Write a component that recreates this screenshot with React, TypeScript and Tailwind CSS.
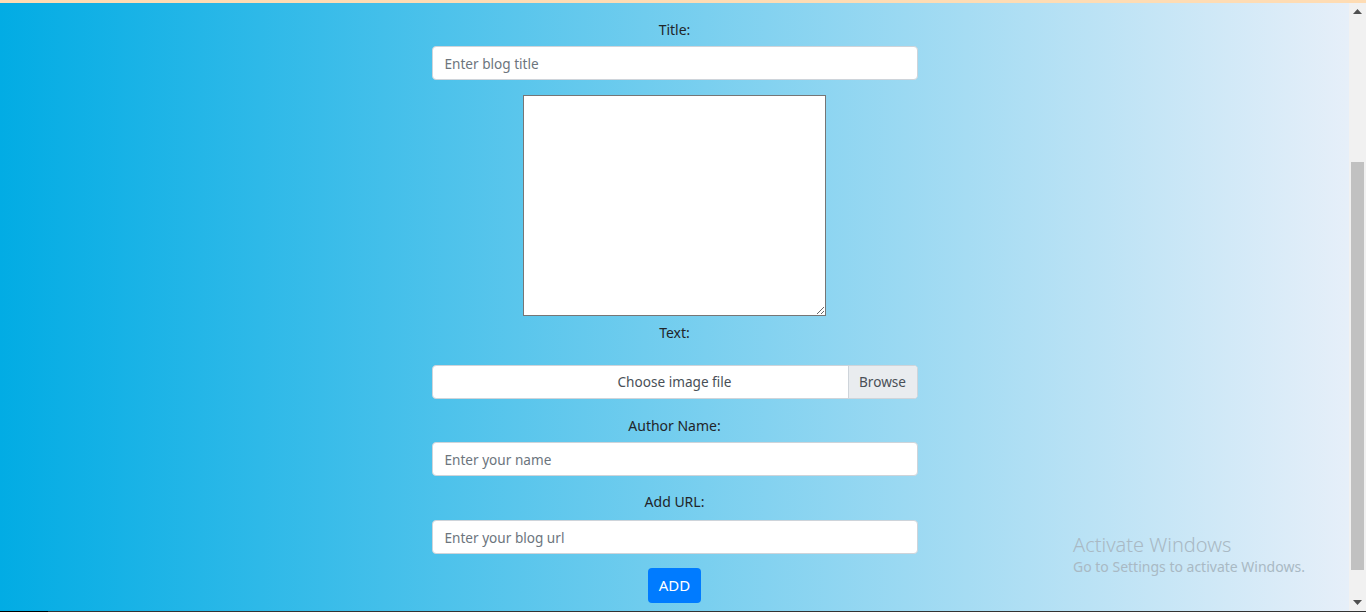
import React from "react";

const font = { fontFamily: '"Segoe UI", "Noto Sans", "Open Sans", Arial, sans-serif' };

function Label({ children, className = "" }: { children: React.ReactNode; className?: string }) {
  return (
    <div className={"text-[14px] leading-[21px] text-[#212529] text-center " + className}>{children}</div>
  );
}

function Input({ placeholder, className = "" }: { placeholder: string; className?: string }) {
  return (
    <input
      type="text"
      placeholder={placeholder}
      className={
        "block w-[486px] h-[34px] rounded-[4px] border border-[#ced4da] bg-white px-3 text-[13.6px] text-[#495057] placeholder:text-[#6c757d] outline-none " +
        className
      }
      style={font}
    />
  );
}

export default function App() {
  return (
    <div className="w-[1366px] h-[612px] flex flex-col overflow-hidden relative" style={font}>
      <div className="h-[3px] bg-[#fedcb4] shrink-0" />
      <div className="flex flex-1 min-h-0">
        <div className="flex-1 bg-[linear-gradient(to_right,#02ace4,#e6eff9)] flex flex-col items-center pt-[16px]">
          <Label>Title:</Label>
          <Input placeholder="Enter blog title" className="mt-[6px]" />
          <textarea className="block mt-[15px] w-[303px] h-[221px] border border-[#767676] bg-white" />
          <Label className="mt-[6px]">Text:</Label>
          <div className="mt-[22px] w-[486px] h-[34px] flex rounded-[4px] border border-[#ced4da] bg-white overflow-hidden">
            <div className="flex-1 relative">
              <span className="absolute left-0 top-0 w-[484px] h-full flex items-center justify-center text-[13.6px] text-[#495057]">
                Choose image file
              </span>
            </div>
            <div className="relative w-[69px] h-full bg-[#e9ecef] border-l border-[#ced4da] flex items-center justify-center text-[13.6px] text-[#495057]">
              Browse
            </div>
          </div>
          <Label className="mt-[16px]">Author Name:</Label>
          <Input placeholder="Enter your name" className="mt-[6px]" />
          <Label className="mt-[15px]">Add URL:</Label>
          <Input placeholder="Enter your blog url" className="mt-[8px]" />
          <button className="mt-[14px] w-[53px] h-[35px] rounded-[4px] bg-[#007bff] text-white text-[15px] flex items-center justify-center">
            ADD
          </button>
        </div>
        <div className="w-[17px] bg-[#f1f1f1] flex flex-col items-center relative">
          <div className="h-[17px] w-full flex items-center justify-center">
            <svg width="9" height="5" viewBox="0 0 9 5"><path d="M4.5 0 L9 5 L0 5 Z" fill="#505050" /></svg>
          </div>
          <div className="mt-[142px] w-[13px] h-[408px] bg-[#c1c1c1]" />
          <div className="flex-1" />
          <div className="h-[17px] w-full flex items-center justify-center">
            <svg width="9" height="5" viewBox="0 0 9 5"><path d="M0 0 L9 0 L4.5 5 Z" fill="#505050" /></svg>
          </div>
        </div>
      </div>
      <div className="h-[1px] shrink-0 flex">
        <div className="w-[48px] bg-black" />
        <div className="flex-1 bg-[#333333]" />
      </div>
      <div className="absolute left-[1073px] top-[532px] text-[#a9b9c4] pointer-events-none">
        <div className="text-[20px] leading-[26px]" style={{ fontWeight: 300 }}>Activate Windows</div>
        <div className="text-[14px] leading-[18px]">Go to Settings to activate Windows.</div>
      </div>
    </div>
  );
}
